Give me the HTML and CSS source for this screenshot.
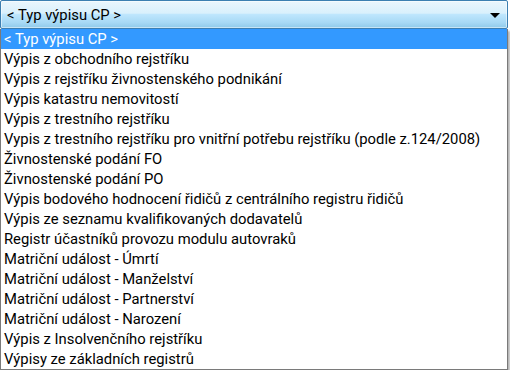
FILE: index.html
```html
<!DOCTYPE html>
<html lang="cs">
<head>
<meta charset="utf-8">
<title>Typ výpisu CP</title>
<link rel="stylesheet" href="styles.css">
</head>
<body>
<div class="wrap">
  <div class="combo">
    <span class="combo-value">&lt; Typ výpisu CP &gt;</span>
    <span class="combo-arrow"></span>
  </div>
  <ul class="list">
    <li class="item selected">&lt; Typ výpisu CP &gt;</li>
    <li class="item">Výpis z obchodního rejstříku</li>
    <li class="item">Výpis z rejstříku živnostenského podnikání</li>
    <li class="item">Výpis katastru nemovitostí</li>
    <li class="item">Výpis z trestního rejstříku</li>
    <li class="item">Vypis z trestního rejstříku pro vnitřní potřebu rejstříku (podle z.124/2008)</li>
    <li class="item">Živnostenské podání FO</li>
    <li class="item">Živnostenské podání PO</li>
    <li class="item">Výpis bodového hodnocení řidičů z centrálního registru řidičů</li>
    <li class="item">Výpis ze seznamu kvalifikovaných dodavatelů</li>
    <li class="item">Registr účastníků provozu modulu autovraků</li>
    <li class="item">Matriční událost - Úmrtí</li>
    <li class="item">Matriční událost - Manželství</li>
    <li class="item">Matriční událost - Partnerství</li>
    <li class="item">Matriční událost - Narození</li>
    <li class="item">Výpis z Insolvenčního rejstříku</li>
    <li class="item">Výpisy ze základních registrů</li>
  </ul>
</div>
</body>
</html>
```

FILE: styles.css
```css
html, body {
  margin: 0;
  padding: 0;
  background: #ffffff;
}

body {
  font-family: Roboto, "Open Sans", "DejaVu Sans", sans-serif;
  font-size: 14.8px;
  color: #000000;
}

.wrap {
  width: 508px;
}

.combo {
  box-sizing: border-box;
  height: 29px;
  border: 1px solid #3c7fb1;
  border-radius: 2px;
  background: linear-gradient(to bottom, #eaf6fd 0%, #d9f0fc 45%, #bee6fd 50%, #a7d9f5 80%, #8fcaea 100%);
  box-shadow: inset 0 0 0 1px rgba(255, 255, 255, 0.5);
  display: flex;
  align-items: center;
  justify-content: space-between;
  padding: 0 7px 0 6px;
}

.combo-value {
  line-height: 20px;
  margin-top: 1px;
}

.combo-arrow {
  width: 0;
  height: 0;
  border-left: 5px solid transparent;
  border-right: 5px solid transparent;
  border-top: 5px solid #000000;
  margin-top: 1px;
}

.list {
  list-style: none;
  margin: 0;
  padding: 0;
  box-sizing: border-box;
  border: 1px solid #7a7a7a;
  border-top: none;
  box-shadow: 2px 2px 2px rgba(0, 0, 0, 0.3);
}

.item {
  height: 20px;
  line-height: 20px;
  padding-left: 3px;
  white-space: nowrap;
}

.item.selected {
  background: #3399ff;
  color: #ffffff;
}
```
